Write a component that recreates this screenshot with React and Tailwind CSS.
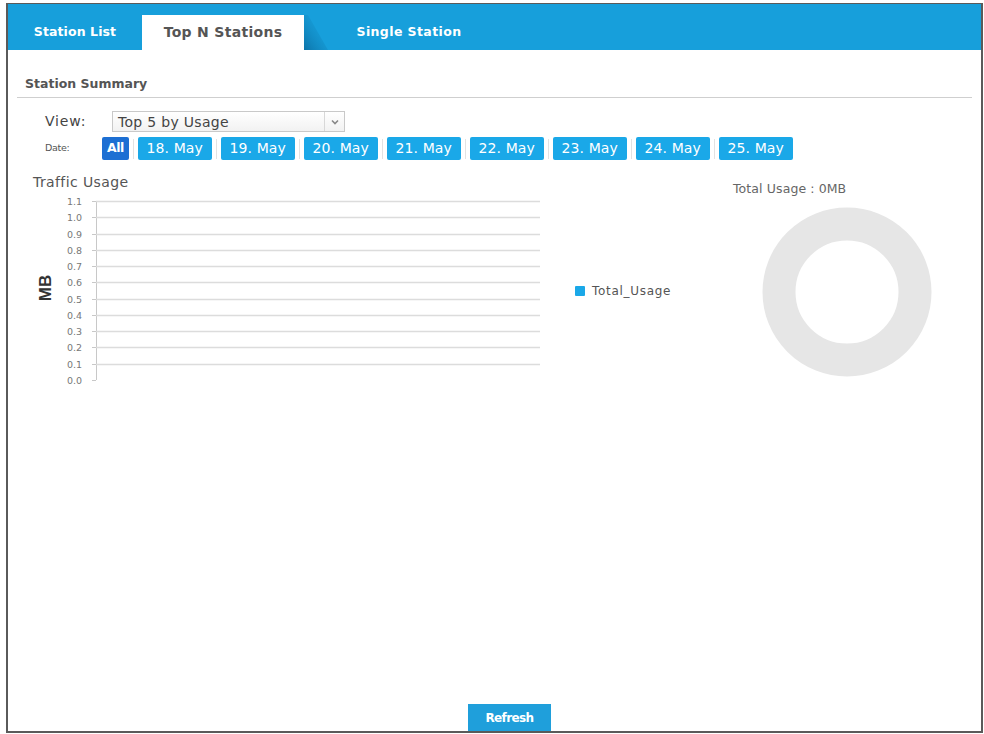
import React from "react";

const dates = ["18. May", "19. May", "20. May", "21. May", "22. May", "23. May", "24. May", "25. May"];
const ticks = ["1.1", "1.0", "0.9", "0.8", "0.7", "0.6", "0.5", "0.4", "0.3", "0.2", "0.1", "0.0"];

function Chart() {
  const top = 9;
  const step = 16.27;
  return (
    <svg width="540" height="205" className="block">
      <text
        x="0"
        y="0"
        transform="translate(43 96) rotate(-90)"
        textAnchor="middle"
        fontFamily="'Liberation Sans', Arial, sans-serif"
        fontWeight="bold"
        fontSize="17"
        fill="#333"
      >
        MB
      </text>
      <line x1="88.5" y1={top} x2="88.5" y2={top + step * 11} stroke="#c8c8c8" strokeWidth="1" />
      {ticks.map((t, i) => {
        const y = Math.round(top + step * i) + 0.5;
        return (
          <g key={t}>
            <text
              x="74"
              y={y + 3.5}
              textAnchor="end"
              fontFamily="'DejaVu Sans', sans-serif"
              fontSize="9.5"
              fill="#777"
            >
              {t}
            </text>
            <line x1="84" y1={y} x2="88" y2={y} stroke="#c8c8c8" />
            {i < 11 && <line x1="88" y1={y} x2="532" y2={y} stroke="#dcdcdc" strokeWidth="1.5" />}
          </g>
        );
      })}
    </svg>
  );
}

export default function App() {
  return (
    <div className="w-[984px] h-[734px] bg-white pt-[3px] pl-[6px]" style={{ fontFamily: "'DejaVu Sans', 'Noto Sans', sans-serif" }}>
      <div className="w-[977px] h-[730px] border-t border-l-2 border-r-2 border-b-2 border-[#5a5a5a] flex flex-col">
        {/* header */}
        <div className="h-[46px] bg-[#179fdb] flex items-end pt-[11px]">
          <div className="w-[134px] h-[35px] flex items-center justify-center text-white font-bold text-[12.5px] tracking-[0.1px]">Station List</div>
          <div className="relative w-[162px] h-[35px] bg-white flex items-center justify-center text-[#555] font-bold text-[14px] tracking-[0.3px]">
            Top N Stations
            <svg className="absolute left-full top-0" width="26" height="35">
              <defs>
                <linearGradient id="sh" x1="0" y1="1" x2="1" y2="0">
                  <stop offset="0" stopColor="#0b6fa3" stopOpacity="0.9" />
                  <stop offset="1" stopColor="#179fdb" stopOpacity="0" />
                </linearGradient>
              </defs>
              <polygon points="0,0 4,0 24,35 0,35" fill="url(#sh)" />
            </svg>
          </div>
          <div className="w-[210px] h-[35px] flex items-center justify-center text-white font-bold text-[12.5px] tracking-[0.4px]">Single Station</div>
        </div>

        {/* Station summary */}
        <div className="mx-[9px] h-[48px] flex items-end pb-[3px] pl-[8px] border-b border-[#cfcfcf] text-[12.5px] font-bold text-[#555]">
          Station Summary
        </div>

        <div className="flex items-center mt-[13px] pl-[37px] h-[21px]">
          <span className="w-[67px] text-[14px] text-[#444] tracking-[0.8px]">View:</span>
          <div className="w-[233px] h-[21px] border border-[#c9c9c9] bg-gradient-to-b from-white to-[#f2f2f2] flex items-center">
            <span className="flex-1 pl-[5px] text-[14px] text-[#444] leading-none tracking-[0.3px]">Top 5 by Usage</span>
            <span className="w-[20px] h-full border-l border-[#d8d8d8] flex items-center justify-center">
              <svg width="8" height="6" viewBox="0 0 8 6">
                <path d="M1 1.5 L4 4.5 L7 1.5" stroke="#888" strokeWidth="1.6" fill="none" />
              </svg>
            </span>
          </div>
        </div>

        <div className="flex items-center mt-[5px] pl-[37px] h-[23px]">
          <span className="w-[57px] text-[9.5px] text-[#555] tracking-[-0.3px]">Date:</span>
          <div className="h-[23px] px-[5px] rounded-[2px] bg-[#1d6fd3] text-white text-[12.5px] font-bold flex items-center tracking-[-0.5px]">All</div>
          {dates.map((d) => (
            <React.Fragment key={d}>
              <span className="mx-[4px] w-px h-[20px] bg-[#e2e2e2]" />
              <div className="h-[23px] w-[74px] rounded-[2px] bg-[#1aa8e8] text-white text-[14px] flex items-center justify-center tracking-[0.1px]">
                {d}
              </div>
            </React.Fragment>
          ))}
        </div>

        {/* charts */}
        <div className="flex mt-[12px]">
          <div className="w-[540px] flex flex-col">
            <div className="pl-[25px] text-[14px] text-[#555] leading-[20px] tracking-[0.4px]">Traffic Usage</div>
            <Chart />
          </div>
          <div className="w-[150px] pl-[27px] pt-[110px]">
            <div className="flex items-center gap-[7px]">
              <span className="w-[10px] h-[10px] bg-[#1aa8e8] rounded-[1px]" />
              <span className="text-[12px] text-[#555] tracking-[0.7px]">Total_Usage</span>
            </div>
          </div>
          <div className="flex flex-col">
            <div className="ml-[35px] text-[12.5px] text-[#666] leading-[20px] mt-[7px] tracking-[0.1px]">Total Usage : 0MB</div>
            <svg className="ml-[64px] mt-[8px]" width="170" height="170" viewBox="0 0 170 170">
              <circle cx="85" cy="85" r="68" fill="none" stroke="#e6e6e6" strokeWidth="33" />
            </svg>
          </div>
        </div>

        <div className="flex-1 flex items-end">
          <div className="ml-[460px] w-[83px] h-[27px] bg-[#1f9fdb] text-white font-bold text-[12px] flex items-center justify-center tracking-[-0.6px]">
            Refresh
          </div>
        </div>
      </div>
    </div>
  );
}
